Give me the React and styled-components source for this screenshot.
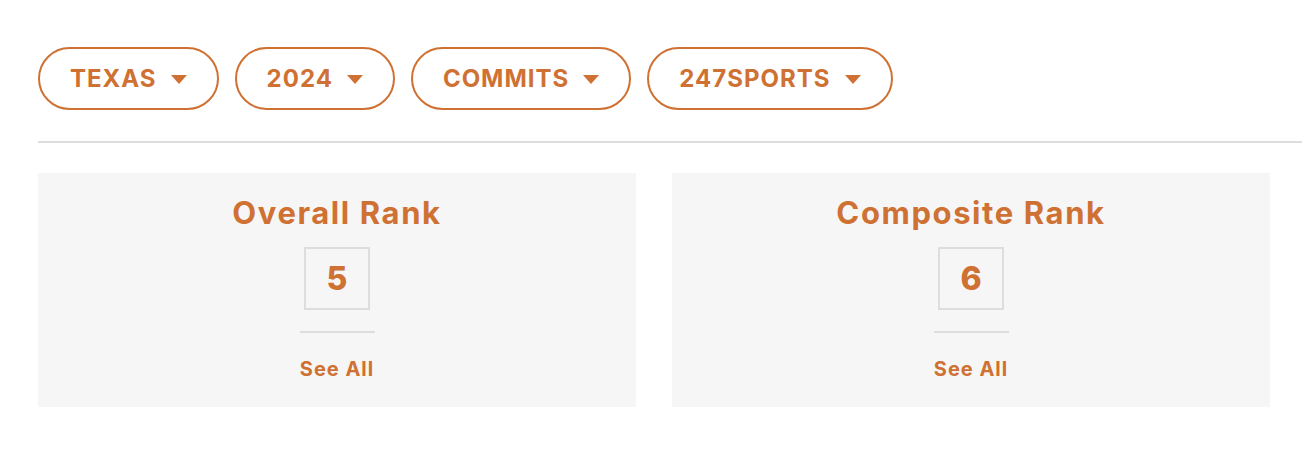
import React from "react";
import styled, { createGlobalStyle } from "styled-components";

const ORANGE = "#cf7133";

const Global = createGlobalStyle`
  html, body { margin: 0; padding: 0; background: #fff; }
  body { font-family: Inter, "Open Sans", Arial, sans-serif; }
  * { box-sizing: border-box; }
`;

const Page = styled.div`
  padding: 47px 0 0 38px;
  width: 1302px;
`;

const FilterRow = styled.div`
  display: flex;
  gap: 16px;
`;

const Pill = styled.button`
  height: 63px;
  display: flex;
  align-items: center;
  gap: 14px;
  padding: 0 30px;
  border: 2px solid ${ORANGE};
  border-radius: 32px;
  background: #fff;
  color: ${ORANGE};
  font-family: Inter, Arial, sans-serif;
  font-weight: 700;
  font-size: 24px;
  letter-spacing: 1px;
  cursor: pointer;
`;

const Caret = styled.span`
  width: 0;
  height: 0;
  border-left: 8px solid transparent;
  border-right: 8px solid transparent;
  border-top: 9px solid ${ORANGE};
  margin-top: 1px;
`;

const Rule = styled.hr`
  margin: 31px 0 30px;
  border: 0;
  height: 2px;
  background: #dddddd;
`;

const Cards = styled.div`
  display: grid;
  grid-template-columns: 598px 598px;
  gap: 36px;
`;

const Card = styled.div`
  height: 234px;
  background: #f6f6f6;
  display: flex;
  flex-direction: column;
  align-items: center;
  padding-top: 20px;
`;

const Title = styled.h2`
  margin: 0;
  line-height: 40px;
  font-size: 31px;
  font-weight: 700;
  color: ${ORANGE};
  letter-spacing: 1.6px;
`;

const NumberBox = styled.div`
  margin-top: 14px;
  width: 66px;
  height: 63px;
  border: 2px solid #dddddd;
  display: flex;
  align-items: center;
  justify-content: center;
  font-size: 32px;
  font-weight: 800;
  color: ${ORANGE};
`;

const Divider = styled.div`
  margin-top: 21px;
  width: 75px;
  height: 2px;
  background: #dddddd;
`;

const SeeAll = styled.a`
  margin-top: 24px;
  line-height: 24px;
  font-size: 20px;
  font-weight: 700;
  color: ${ORANGE};
  letter-spacing: 1px;
  text-decoration: none;
  cursor: pointer;
`;

const filters = ["TEXAS", "2024", "COMMITS", "247SPORTS"];
const ranks = [
  { title: "Overall Rank", value: 5 },
  { title: "Composite Rank", value: 6 },
];

export default function App() {
  return (
    <>
      <Global />
      <Page>
        <FilterRow>
          {filters.map((f) => (
            <Pill key={f}>
              {f}
              <Caret />
            </Pill>
          ))}
        </FilterRow>
        <Rule />
        <Cards>
          {ranks.map((r) => (
            <Card key={r.title}>
              <Title>{r.title}</Title>
              <NumberBox>{r.value}</NumberBox>
              <Divider />
              <SeeAll>See All</SeeAll>
            </Card>
          ))}
        </Cards>
      </Page>
    </>
  );
}
